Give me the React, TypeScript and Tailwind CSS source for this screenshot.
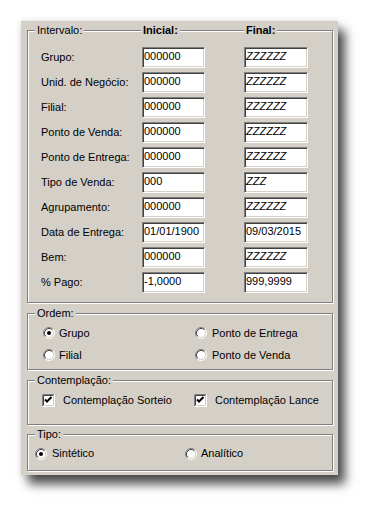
import type { ReactNode } from "react"

const rows = [
  { label: "Grupo:", ini: "000000", fim: "ZZZZZZ" },
  { label: "Unid. de Negócio:", ini: "000000", fim: "ZZZZZZ" },
  { label: "Filial:", ini: "000000", fim: "ZZZZZZ" },
  { label: "Ponto de Venda:", ini: "000000", fim: "ZZZZZZ" },
  { label: "Ponto de Entrega:", ini: "000000", fim: "ZZZZZZ" },
  { label: "Tipo de Venda:", ini: "000", fim: "ZZZ" },
  { label: "Agrupamento:", ini: "000000", fim: "ZZZZZZ" },
  { label: "Data de Entrega:", ini: "01/01/1900", fim: "09/03/2015" },
  { label: "Bem:", ini: "000000", fim: "ZZZZZZ" },
  { label: "% Pago:", ini: "-1,0000", fim: "999,9999" },
]

function GroupBox({ label, className, children }: { label: string; className: string; children: ReactNode }) {
  return (
    <div className={"relative border border-[#808080] shadow-[inset_1px_1px_0_#ffffff,1px_1px_0_#ffffff] " + className}>
      <span className="absolute left-[7px] -top-[7px] bg-[#d4d0c8] px-[2px] leading-[13px]">{label}</span>
      {children}
    </div>
  )
}

function Field({ value, width }: { value: string; width: string }) {
  const isZ = value.startsWith("Z")
  return (
    <div
      className={
        "h-[21px] bg-white border border-t-[#808080] border-l-[#808080] border-b-white border-r-white shadow-[inset_1px_1px_0_#404040,inset_-1px_-1px_0_#d4d0c8] pl-[1px] pt-[2px] leading-[13px] whitespace-nowrap overflow-hidden " +
        width +
        (isZ ? " italic" : "")
      }
    >
      {value}
    </div>
  )
}

function Radio({ checked }: { checked?: boolean }) {
  return (
    <svg width="12" height="12" viewBox="0 0 12 12" className="shrink-0">
      <circle cx="6" cy="6" r="5" fill="#ffffff" />
      <path d="M2.11 9.89 A5.5 5.5 0 0 1 9.89 2.11" fill="none" stroke="#808080" strokeWidth="1" />
      <path d="M9.89 2.11 A5.5 5.5 0 0 1 2.11 9.89" fill="none" stroke="#ffffff" strokeWidth="1" />
      <path d="M2.82 9.18 A4.5 4.5 0 0 1 9.18 2.82" fill="none" stroke="#404040" strokeWidth="1" />
      <path d="M9.18 2.82 A4.5 4.5 0 0 1 2.82 9.18" fill="none" stroke="#d4d0c8" strokeWidth="1" />
      {checked && <circle cx="6" cy="6" r="2" fill="#000000" />}
    </svg>
  )
}

function Check() {
  return (
    <svg width="13" height="13" viewBox="0 0 13 13" className="shrink-0">
      <rect x="0" y="0" width="13" height="13" fill="#ffffff" />
      <path d="M0.5 12.5 V0.5 H12.5" fill="none" stroke="#808080" />
      <path d="M1.5 11.5 V1.5 H11.5" fill="none" stroke="#404040" />
      <path d="M0.5 12.5 H12.5 V0.5" fill="none" stroke="#ffffff" />
      <path d="M1.5 11.5 H11.5 V1.5" fill="none" stroke="#d4d0c8" />
      <path d="M3 5.5 L5 7.5 L9.5 3" fill="none" stroke="#000000" strokeWidth="2" />
    </svg>
  )
}

export default function App() {
  return (
    <div className="w-[381px] h-[517px] bg-white pt-[21px] pl-[21px] font-['Liberation_Sans',Arial,sans-serif] text-[11px] text-black">
      <div className="w-[317px] h-[454px] bg-[#d4d0c8] pt-[9px] pl-[6px] pr-[5px] flex flex-col shadow-[7px_9px_10px_rgba(0,0,0,0.7),0_0_6px_rgba(0,0,0,0.12)]">
        {/* Intervalo */}
        <GroupBox label="Intervalo:" className="h-[273px] pt-[16px]">
          <span className="absolute left-[113px] -top-[7px] bg-[#d4d0c8] px-[2px] leading-[13px] font-bold">Inicial:</span>
          <span className="absolute left-[216px] -top-[7px] bg-[#d4d0c8] px-[2px] leading-[13px] font-bold">Final:</span>
          <div className="flex flex-col gap-[4px]">
            {rows.map((r) => (
              <div key={r.label} className="flex items-center h-[21px] pl-[13px]">
                <span className="w-[101px] leading-[13px] whitespace-nowrap">{r.label}</span>
                <Field value={r.ini} width="w-[63px]" />
                <div className="w-[39px]" />
                <Field value={r.fim} width="w-[64px]" />
              </div>
            ))}
          </div>
        </GroupBox>

        {/* Ordem */}
        <GroupBox label="Ordem:" className="h-[57px] mt-[10px] pt-[8px] pl-[15px]">
          <div className="grid grid-cols-[152px_1fr] auto-rows-[22px]">
            <label className="flex items-center gap-[4px]">
              <Radio checked />
              <span className="leading-[13px]">Grupo</span>
            </label>
            <label className="flex items-center gap-[5px]">
              <Radio />
              <span className="leading-[13px]">Ponto de Entrega</span>
            </label>
            <label className="flex items-center gap-[4px]">
              <Radio />
              <span className="leading-[13px]">Filial</span>
            </label>
            <label className="flex items-center gap-[5px]">
              <Radio />
              <span className="leading-[13px]">Ponto de Venda</span>
            </label>
          </div>
        </GroupBox>

        {/* Contemplação */}
        <GroupBox label="Contemplação:" className="h-[45px] mt-[10px] pt-[13px] pl-[14px]">
          <div className="flex h-[13px]">
            <label className="w-[152px] flex items-center gap-[8px]">
              <Check />
              <span className="leading-[13px]">Contemplação Sorteio</span>
            </label>
            <label className="flex items-center gap-[8px]">
              <Check />
              <span className="leading-[13px]">Contemplação Lance</span>
            </label>
          </div>
        </GroupBox>

        {/* Tipo */}
        <GroupBox label="Tipo:" className="h-[37px] mt-[9px] pt-[12px] pl-[7px]">
          <div className="flex h-[13px]">
            <label className="w-[150px] flex items-center gap-[5px]">
              <Radio checked />
              <span className="leading-[13px]">Sintético</span>
            </label>
            <label className="flex items-center gap-[4px]">
              <Radio />
              <span className="leading-[13px]">Analítico</span>
            </label>
          </div>
        </GroupBox>
      </div>
    </div>
  )
}
